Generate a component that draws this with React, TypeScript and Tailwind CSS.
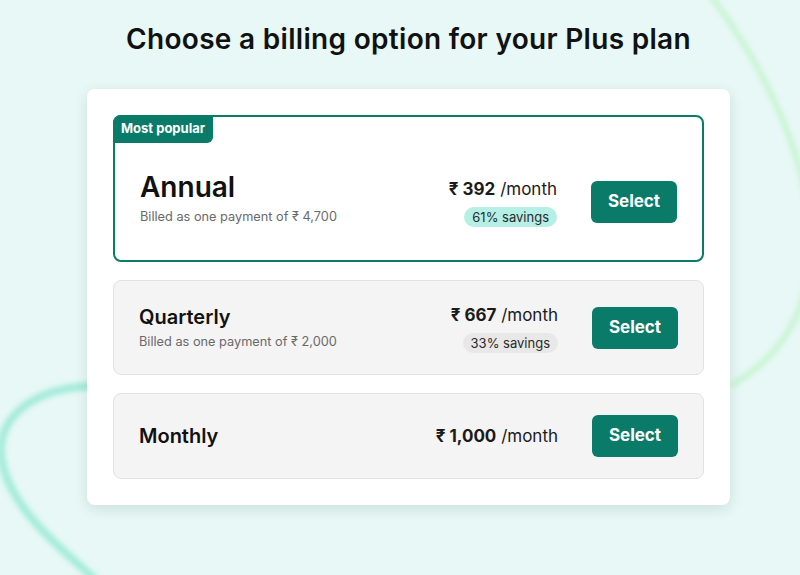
import React from 'react';

type Plan = {
  name: string;
  price: string;
  billed?: string;
  savings?: string;
  popular?: boolean;
};

const PLANS: Plan[] = [
  { name: 'Annual', price: '392', billed: '₹ 4,700', savings: '61% savings', popular: true },
  { name: 'Quarterly', price: '667', billed: '₹ 2,000', savings: '33% savings' },
  { name: 'Monthly', price: '1,000' },
];

function SelectButton() {
  return (
    <button className="h-[42px] w-[86px] rounded-md bg-[#0b7b69] text-[17px] font-bold text-white">
      Select
    </button>
  );
}

function Price({ plan }: { plan: Plan }) {
  return (
    <div className="flex flex-col items-end">
      <div className="text-[17px] leading-6 text-[#1a1a1a]">
        <span className="font-bold">₹ {plan.price}</span> /month
      </div>
      {plan.savings && (
        <span
          className={`mt-[6px] rounded-full px-[8px] py-[2px] text-[13px] leading-4 text-[#2a2a2a] ${
            plan.popular ? 'bg-[#b5efe5]' : 'bg-[#e8e8e8]'
          }`}
        >
          {plan.savings}
        </span>
      )}
    </div>
  );
}

export default function App() {
  const [annual, quarterly, monthly] = PLANS;

  return (
    <div
      className="relative h-[575px] w-[800px] overflow-hidden bg-[#e7f8f6]"
      style={{ fontFamily: 'Inter, "Noto Sans", sans-serif' }}
    >
      {/* background swooshes */}
      <svg className="pointer-events-none absolute inset-0" width="800" height="575">
        <defs>
          <filter id="blur" x="-20%" y="-20%" width="140%" height="140%">
            <feGaussianBlur stdDeviation="2.5" />
          </filter>
        </defs>
        <path
          d="M 711 -4 C 790 100, 880 300, 730 386"
          fill="none"
          stroke="#c9f5d2"
          strokeWidth="6"
          filter="url(#blur)"
        />
        <path
          d="M 92 386 C 30 388, -6 420, 2 462 C 12 510, 60 548, 96 580"
          fill="none"
          stroke="#a5ebdb"
          strokeWidth="8"
          filter="url(#blur)"
        />
      </svg>

      <div className="relative flex flex-col items-center pl-[17px]">
        <h1 className="mt-[21px] text-[28px] font-semibold leading-9 tracking-[0.3px] text-[#111]">
          Choose a billing option for your Plus plan
        </h1>

        <div className="mt-[32px] flex w-[643px] flex-col gap-[18px] rounded-lg bg-white p-[26px] shadow-[0_4px_14px_rgba(0,60,60,0.12)]">
          {/* Annual */}
          <div className="relative flex h-[147px] items-center justify-between rounded-lg border-2 border-[#0b7b69] pl-[25px] pr-[25px] pt-[26px]">
            <span className="absolute left-[-2px] top-[-2px] flex h-[28px] items-center rounded-tl-lg rounded-br-md bg-[#0b7b69] px-[8px] text-[13px] font-bold text-white">
              Most popular
            </span>
            <div className="pb-[6px]">
              <div className="text-[28px] font-semibold leading-8 text-[#111]">{annual.name}</div>
              <div className="mt-[4px] text-[12.75px] text-[#6a6a6a]">Billed as one payment of {annual.billed}</div>
            </div>
            <div className="flex items-center gap-[34px]">
              <Price plan={annual} />
              <SelectButton />
            </div>
          </div>

          {/* Quarterly */}
          <div className="flex h-[95px] items-center justify-between rounded-lg border border-[#e2e2e2] bg-[#f4f4f4] pl-[25px] pr-[25px]">
            <div>
              <div className="text-[20px] font-semibold leading-7 text-[#111]">{quarterly.name}</div>
              <div className="mt-[1px] text-[12.75px] text-[#6a6a6a]">Billed as one payment of {quarterly.billed}</div>
            </div>
            <div className="flex items-center gap-[34px]">
              <Price plan={quarterly} />
              <SelectButton />
            </div>
          </div>

          {/* Monthly */}
          <div className="flex h-[86px] items-center justify-between rounded-lg border border-[#e2e2e2] bg-[#f4f4f4] pl-[25px] pr-[25px]">
            <div className="text-[20px] font-semibold leading-7 text-[#111]">{monthly.name}</div>
            <div className="flex items-center gap-[34px]">
              <Price plan={monthly} />
              <SelectButton />
            </div>
          </div>
        </div>
      </div>
    </div>
  );
}
